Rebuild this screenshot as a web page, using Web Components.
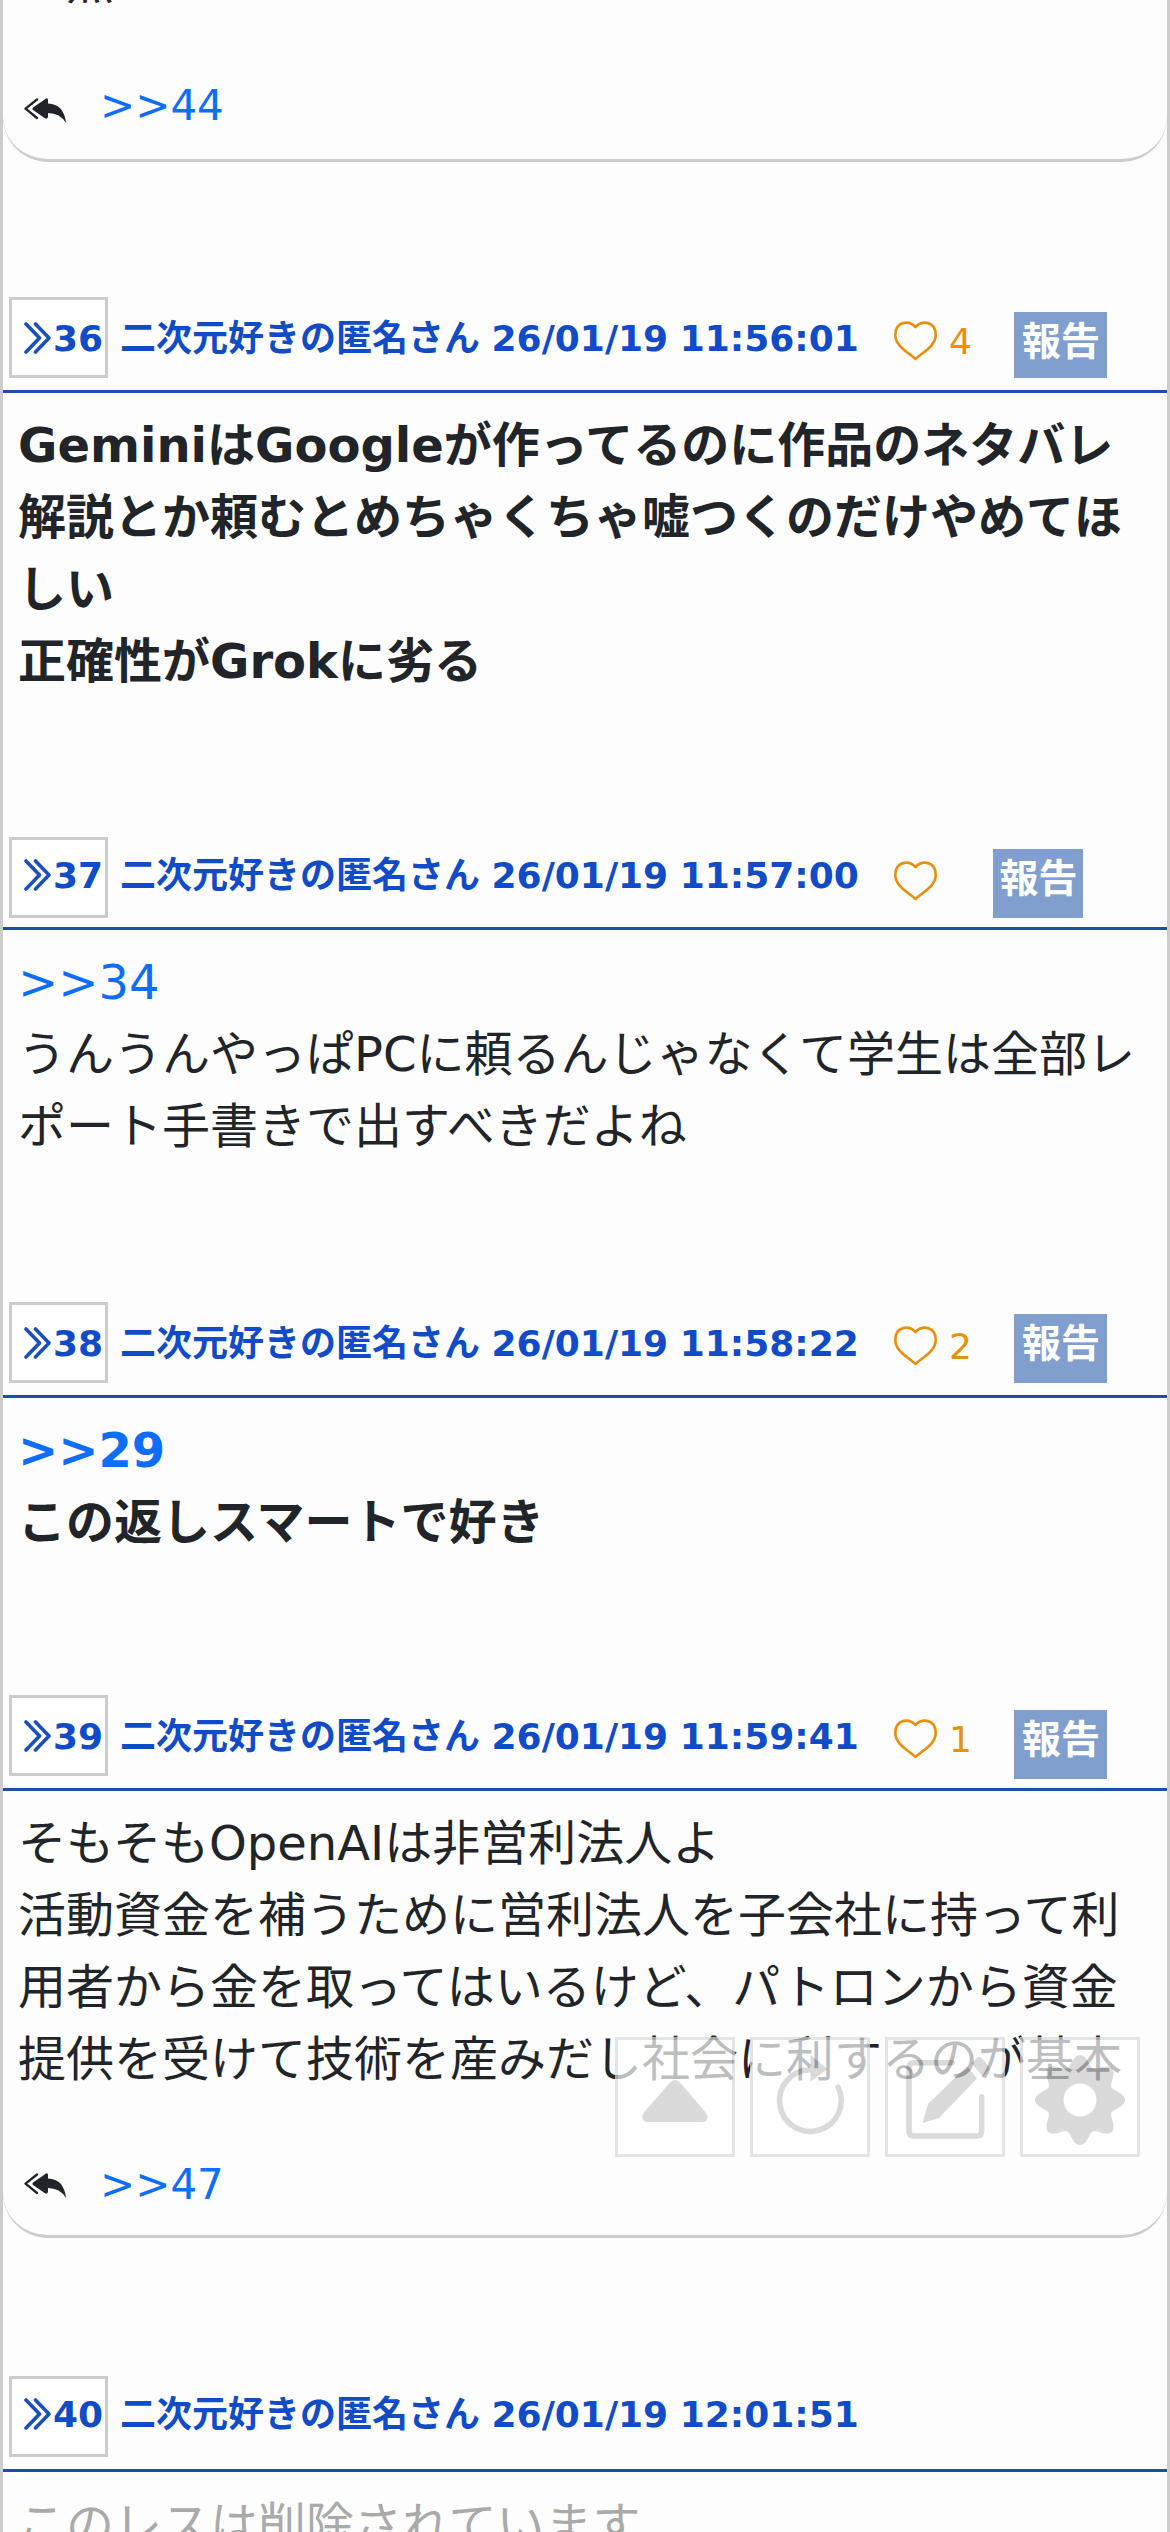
<!DOCTYPE html>
<html lang="ja">
<head>
<meta charset="utf-8">
<title>スレッド</title>
<style>
html,body{margin:0;padding:0}
body{width:1170px;height:2532px;overflow:hidden;background:#fdfdfd;font-family:"DejaVu Sans","Noto Sans CJK JP",sans-serif;color:#212529}
</style>
</head>
<body>
<thread-page>
  <thread-post style="--body:162px" tail>
    <span slot="body">　点</span>
    <reply-links slot="replies" style="--h:83px;--icon:22px">&gt;&gt;44</reply-links>
  </thread-post>
  <thread-post no="36" date="26/01/19 11:56:01" likes="4" gap="135" head="93" txt="0" heart="24" rep="15" reph="66" bold style="--body:447px">
    <span slot="body">GeminiはGoogleが作ってるのに作品のネタバレ<br>解説とか頼むとめちゃくちゃ嘘つくのだけやめてほ<br>しい<br>正確性がGrokに劣る</span>
  </thread-post>
  <thread-post no="37" date="26/01/19 11:57:00" likes="" gap="0" head="90" txt="-3" heart="24" rep="12" reph="69" style="--body:375px">
    <span slot="body"><post-ref>&gt;&gt;34</post-ref><br>うんうんやっぱPCに頼るんじゃなくて学生は全部レ<br>ポート手書きで出すべきだよね</span>
  </thread-post>
  <thread-post no="38" date="26/01/19 11:58:22" likes="2" gap="0" head="93" txt="0" heart="24" rep="12" reph="69" bold style="--body:300px">
    <span slot="body"><post-ref>&gt;&gt;29</post-ref><br>この返しスマートで好き</span>
  </thread-post>
  <thread-post no="39" date="26/01/19 11:59:41" likes="1" gap="0" head="93" txt="0" heart="24" rep="15" reph="69" tail style="--body:450px">
    <span slot="body">そもそもOpenAIは非営利法人よ<br>活動資金を補うために営利法人を子会社に持って利<br>用者から金を取ってはいるけど、パトロンから資金<br>提供を受けて技術を産みだし社会に利するのが基本</span>
    <reply-links slot="replies" style="--h:80px;--icon:18px">&gt;&gt;47</reply-links>
  </thread-post>
  <thread-post no="40" date="26/01/19 12:01:51" gap="138" head="93" txt="-3" deleted style="--body:60px">
    <span slot="body">このレスは削除されています</span>
  </thread-post>
  <float-tools slot="tools"></float-tools>
</thread-page>

<script>
class ThreadPage extends HTMLElement{
  constructor(){super();this.attachShadow({mode:'open'}).innerHTML=`<style>
  :host{display:block;box-sizing:border-box;width:1170px;height:2532px;border:solid #ccc;border-width:0 3px;overflow:hidden;position:relative}
  </style><slot></slot><slot name="tools"></slot>`}
}
class PostRef extends HTMLElement{
  constructor(){super();this.attachShadow({mode:'open'}).innerHTML=`<style>:host{color:#0d6efd}</style><slot></slot>`}
}
class ReplyLinks extends HTMLElement{
  constructor(){super();this.attachShadow({mode:'open'}).innerHTML=`<style>
  :host{display:flex;flex:none;height:var(--h);align-items:flex-start;font-size:42px;line-height:60px;color:#0d6efd}
  svg{width:42px;height:25px;margin:var(--icon) 34px 0 21px;fill:#212529;flex:none}
  </style><svg viewBox="0 0 42 25"><path d="M21 1.2Q23-.6 24 1.5V5.400Q40 6 42 25Q36 15 24 15V19Q23 21.500 21 20.200L9 12Q8 10.500 9 9.500Z"/><path d="M13 1.500L1.500 10.700L13 20" fill="none" stroke="#212529" stroke-width="2.300" stroke-linecap="round" stroke-linejoin="round"/></svg><slot></slot>`}
}
class PostNumber extends HTMLElement{
  constructor(){super();this.attachShadow({mode:'open'}).innerHTML=`<style>
  :host{display:flex;box-sizing:border-box;width:99px;height:81px;border:3px solid #ccc;background:#fff;flex:none;padding-top:calc(18px + var(--t));padding-left:12px}
  svg{width:27px;height:32px;margin:4px 2px 0 0;flex:none}
  </style><svg viewBox="0 0 27 32"><path d="M2 2L15.500 16L2 30M11.500 2L25 16L11.500 30" fill="none" stroke="#1a4fbd" stroke-width="3.600" stroke-linecap="round" stroke-linejoin="round"/></svg><slot></slot>`}
}
class LikeCount extends HTMLElement{
  constructor(){super();this.attachShadow({mode:'open'}).innerHTML=`<style>
  :host{display:flex;align-items:flex-start;font-weight:400;font-size:36px;line-height:42px;color:#e8900c;height:42px}
  svg{width:43px;height:40px;flex:none}
  span{margin:0 0 0 12px}
  </style><svg viewBox="0 0 43 40"><path d="M21.500 6C15-1 1.300 0 1.300 14C1.300 25 14 31 21.500 38C29 31 41.700 25 41.700 14C41.700 0 28 -1 21.500 6Z" fill="none" stroke="#e8900c" stroke-width="2.600" stroke-linejoin="round"/></svg><span><slot></slot></span>`}
}
class ReportButton extends HTMLElement{
  constructor(){super();this.attachShadow({mode:'open'}).innerHTML=`<style>
  :host{display:block;box-sizing:border-box;background:#809fcf;color:#fff;font-weight:700;font-size:39px;line-height:60px;text-align:center;padding-left:1px;flex:none}
  </style><slot></slot>`}
}
class ThreadPost extends HTMLElement{
  constructor(){super();this.attachShadow({mode:'open'})}
  connectedCallback(){
    const a=n=>this.getAttribute(n), no=a('no'), likes=a('likes');
    const has=likes!==null, n=likes||'', gone=this.hasAttribute('deleted');
    this.shadowRoot.innerHTML=`<style>
    :host{display:block}
    header{display:flex;align-items:flex-start;box-sizing:border-box;margin-top:${a('gap')||0}px;height:${a('head')}px;padding-left:6px;font-size:36px;line-height:42px;font-weight:700;color:#104cc8;--t:${a('txt')||0}px}
    .who{margin:calc(21px + var(--t)) 0 0 12px;width:774px;white-space:nowrap;word-spacing:-1px}
    like-count{margin-top:${a('heart')}px;width:${n?120:99}px}
    report-button{margin-top:${a('rep')}px;width:${n?93:90}px;height:${a('reph')}px}
    section{display:flex;flex-direction:column;justify-content:space-between;box-sizing:border-box;height:var(--body)}
    .rule{border-top:3px solid #1e4fa8}
    .tail{border-bottom:3px solid #ccc;border-radius:0 0 45px 45px}
    .text{margin-top:${no?0:-54}px;padding:${gone?17:no?16:0}px 0 0 15px;font-size:48px;line-height:72px;white-space:nowrap;font-weight:${this.hasAttribute('bold')?700:400};color:${gone?'#aaa':'#212529'}}
    </style>
    ${no?`<header><post-number>${no}</post-number><div class="who">二次元好きの匿名さん ${a('date')}</div>${has?`<like-count>${n}</like-count><report-button>報告</report-button>`:''}</header>`:''}
    <section class="${no?'rule ':''}${this.hasAttribute('tail')?'tail':''}"><div class="text"><slot name="body"></slot></div><slot name="replies"></slot></section>`;
  }
}
// Eight-toothed cog outline, sampled round its centre.
function cog(cx,cy,mid,amp){
  let d='';
  for(let i=0;i<240;i++){
    const t=i/240*2*Math.PI, r=mid+amp*Math.cos(8*t);
    d+=(i?'L':'M')+(cx+r*Math.cos(t)).toFixed(2)+' '+(cy+r*Math.sin(t)).toFixed(2);
  }
  return d+'Z';
}
class FloatTools extends HTMLElement{
  constructor(){super();this.attachShadow({mode:'open'}).innerHTML=`<style>
  :host{position:absolute;left:612px;top:2037px;display:flex;gap:15px}
  div{box-sizing:border-box;width:120px;height:120px;border:3px solid #dadada;background:#fff;opacity:.7}
  svg{display:block;width:114px;height:114px}
  </style>
  <div><svg viewBox="3 3 114 114"><path d="M55 45.500Q60 40.500 65 45.500L91 76Q95 84 88 85H32Q25 84 28.500 76Z" fill="#ccc"/></svg></div>
  <div><svg viewBox="3 3 114 114"><path d="M60 32.800A30.800 30.800 0 1 0 88 50" fill="none" stroke="#ccc" stroke-width="5.500" stroke-linecap="round"/><path d="M60.500 18L77.500 32L60.500 44.500Z" fill="#ccc"/></svg></div>
  <div><svg viewBox="3 3 114 114"><path d="M67 25.700H29Q24 25.700 24 30.500V94Q24 99 29 99H92Q96.700 99 96.700 94V60" fill="none" stroke="#ccc" stroke-width="5.500" stroke-linecap="round"/><path d="M37.500 86L43 67L82 29L92 41.500L54 81ZM86.500 26.500L92 20.500Q94 19 96 20.500L103 28.500Q105 31 103 33.500L98 39.500Z" fill="#ccc"/></svg></div>
  <div><svg viewBox="3 3 114 114"><path fill="#ccc" fill-rule="evenodd" d="${cog(60,63,39.5,5.5)}M60 46.500A16.500 16.500 0 1 0 60 79.500A16.500 16.500 0 1 0 60 46.500Z"/></svg></div>`}
}
customElements.define('post-ref',PostRef);
customElements.define('reply-links',ReplyLinks);
customElements.define('post-number',PostNumber);
customElements.define('like-count',LikeCount);
customElements.define('report-button',ReportButton);
customElements.define('thread-post',ThreadPost);
customElements.define('float-tools',FloatTools);
customElements.define('thread-page',ThreadPage);
</script>
</body>
</html>
